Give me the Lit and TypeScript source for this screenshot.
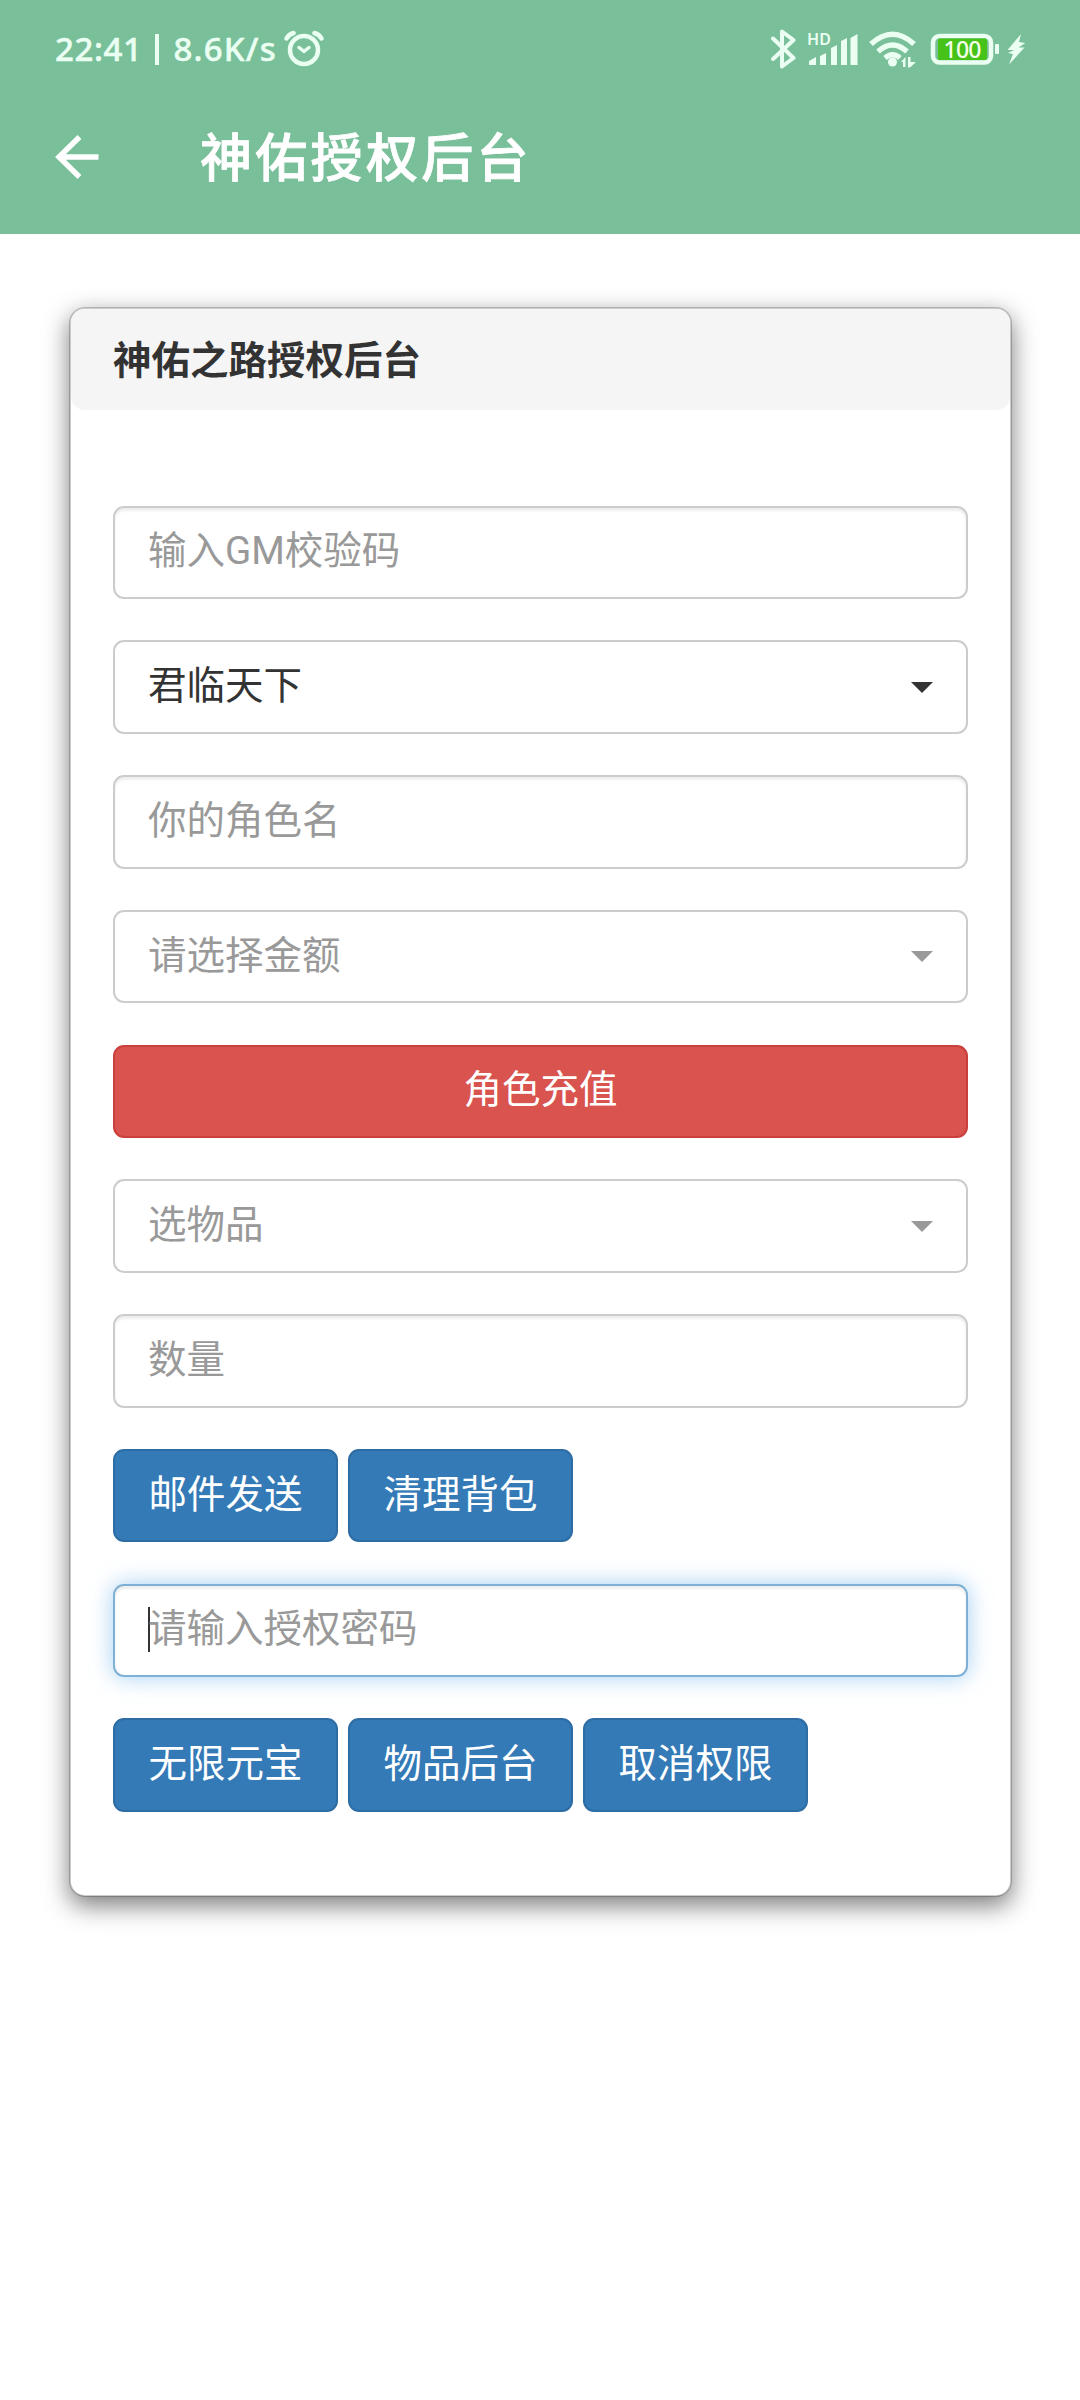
import { LitElement, html, css, nothing } from "lit";
import { customElement, property } from "lit/decorators.js";

@customElement("status-bar")
class StatusBar extends LitElement {
  static styles = css`
    :host { display: flex; box-sizing: border-box; height: 80px; padding: 18px 55px 0 55px; align-items: center; color: #eafff2; font-family: "Noto Sans", "Open Sans", sans-serif; }
    .clock { display: flex; align-items: center; font-size: 33px; font-weight: 500; line-height: 44px; white-space: nowrap; width: 229px; letter-spacing: 0.6px; -webkit-text-stroke: 0.5px #eafff2; }
    .bar { width: 4px; height: 31px; background: #eafff2; margin: 0 14px 0 13px; }
    .speed { letter-spacing: 1.2px; }
    svg { display: block; flex: none; fill: none; stroke: #eafff2; stroke-linecap: round; stroke-linejoin: round; }
    .system { display: flex; align-items: center; margin-left: auto; }
    .bt { margin-right: 10px; }
    .signal { margin-right: 10px; }
    .wifi { margin-right: 13px; }
    .battery { margin-right: 6px; }
    .solid { fill: #eafff2; stroke: none; }
    .level { fill: #46c219; stroke: none; }
    .hd { font: 600 16px "Noto Sans", sans-serif; fill: #eafff2; stroke: none; }
    .pct { font: 500 23px "Noto Sans", sans-serif; fill: #f4ffe9; stroke: none; }
  `;
  render() {
    return html`
      <div class="clock"><span>22:41</span><span class="bar"></span><span class="speed">8.6K/s</span></div>
      <svg width="42" height="42" viewBox="284 28 42 42" stroke-width="4.500">
        <circle cx="304" cy="50" r="14"></circle>
        <path d="M299 47.500l5 4 5-4" stroke-width="3.500"></path>
        <path d="M286.500 38.500q2-4 7-5.500M321.500 38.500q-2-4-7-5.500"></path>
      </svg>
      <div class="system">
        <svg class="bt" width="26" height="42" viewBox="771 28 26 42" stroke-width="4">
          <path d="M773 38.500l20.500 19.500-11.500 8.500v-35l11.500 8.500-20.500 19"></path>
        </svg>
        <svg class="signal" width="52" height="42" viewBox="807 28 52 42">
          <text class="hd" x="807" y="45" textLength="24">HD</text>
          <path class="solid" d="M809 65v-4l7-4v8zM820 65v-9l6-3v12zM831 65v-17l6-3v20zM841 65v-24l6-3v27zM850.500 65v-27l7-4v31z"></path>
        </svg>
        <svg class="wifi" width="48" height="42" viewBox="869 28 48 42" stroke-width="5.500">
          <path d="M871 44q21.500-19.500 43 0M878 51.500q14.500-13 29 0M885 58q7.500-6.500 15 0" stroke-linecap="butt"></path>
          <circle class="solid" cx="892.500" cy="62" r="4.500"></circle>
          <path class="solid" d="M901 62l4.500-5v10h-2.500v-5zM908 57h2.500v5h5.500l-6 5.500h-2z"></path>
        </svg>
        <svg class="battery" width="70" height="42" viewBox="930 28 70 42">
          <rect x="933" y="36" width="58" height="26.500" rx="6.500" stroke-width="4.500"></rect>
          <rect class="level" x="938" y="38.500" width="49" height="21.500" rx="2"></rect>
          <rect class="solid" x="995" y="44" width="4" height="10" rx="1"></rect>
          <text class="pct" x="943.500" y="58" textLength="38">100</text>
        </svg>
        <svg class="charge" width="19" height="42" viewBox="1006 28 19 42">
          <path class="solid" d="M1021 34l-13.500 16h6.500l-6 3 5 1-4 10.500 15.500-17h-6l7-4.500-6.500-1z"></path>
        </svg>
      </div>
    `;
  }
}

@customElement("form-field")
class FormField extends LitElement {
  @property() text = "";
  @property({ type: Boolean, reflect: true }) select = false;
  @property({ type: Boolean, reflect: true }) filled = false;
  @property({ type: Boolean, reflect: true }) active = false;
  static styles = css`
    :host { display: flex; align-items: center; justify-content: space-between; box-sizing: border-box; height: 93.5px; padding: 0 33px; border: 2px solid #ccc; border-radius: 11px; background: #fff; color: #999; box-shadow: inset 0 2.75px 2.75px rgba(0, 0, 0, 0.075); }
    :host([select]) { box-shadow: none; }
    :host([filled]) { color: #333; }
    :host([active]) { border-color: #7fb0d6; box-shadow: inset 0 2.75px 2.75px rgba(0, 0, 0, 0.075), 0 0 22px rgba(102, 175, 233, 0.6); }
    .text { line-height: 55px; white-space: nowrap; margin-top: -3px; }
    .cursor { width: 2px; height: 45px; margin: -2px -2px 0 0; background: #333; flex: none; }
    .value { display: flex; align-items: center; }
    .caret { width: 0; height: 0; border: 11px solid transparent; border-top-color: currentColor; border-bottom: 0; }
  `;
  render() {
    return html`
      <div class="value">
        ${this.active ? html`<span class="cursor"></span>` : nothing}
        <span class="text">${this.text}</span>
      </div>
      ${this.select ? html`<span class="caret"></span>` : nothing}
    `;
  }
}

@customElement("app-root")
class AppRoot extends LitElement {
  static styles = css`
    :host { display: block; height: 2400px; background: #fff; overflow: hidden; font-family: Roboto, "Noto Sans CJK SC", sans-serif; font-size: 38.5px; color: #333; }
    .appbar { background: #78bf9a; height: 234px; }
    .toolbar { display: flex; align-items: center; height: 154px; padding-left: 55px; color: #fff; }
    .back { display: block; width: 46px; height: 46px; fill: none; stroke: #fff; stroke-width: 5.5; }
    .title { margin: 5px 0 0 99px; font-size: 52px; letter-spacing: 3.3px; font-weight: 500; line-height: 80px; -webkit-text-stroke: 0.8px #fff; }
    .card { box-sizing: border-box; margin: 73px 68px 0 69px; height: 1590px; border: 2px solid rgba(0, 0, 0, 0.2); background: #fff; background-clip: padding-box; border-radius: 16px; box-shadow: 0 8.25px 24.75px rgba(0, 0, 0, 0.5); }
    .heading { height: 101px; box-sizing: border-box; padding: 24px 42px 0; background: #f5f5f5; border-radius: 14px; font-weight: 700; line-height: 55px; }
    .form { display: flex; flex-direction: column; gap: 41.25px; padding: 95.500px 42px 0 42px; }
    .row { display: flex; gap: 10px; }
    .btn { box-sizing: border-box; height: 93.5px; width: 225px; padding: 0; border: 2px solid #2e6da4; border-radius: 11px; background: #337ab7; color: #fff; font: inherit; line-height: 55px; padding-bottom: 3px; white-space: nowrap; }
    .danger { width: 100%; border-color: #c9403c; background: #d9534f; }
  `;
  private buttons(labels: string[]) {
    return html`<div class="row">${labels.map((l) => html`<button class="btn">${l}</button>`)}</div>`;
  }
  render() {
    return html`
      <header class="appbar">
        <status-bar></status-bar>
        <div class="toolbar">
          <svg class="back" viewBox="0 0 46 46"><path d="M43.500 23H4M24.500 3L4 23l20.500 20"></path></svg>
          <h1 class="title">神佑授权后台</h1>
        </div>
      </header>
      <main class="card">
        <div class="heading">神佑之路授权后台</div>
        <div class="form">
          <form-field text="输入GM校验码"></form-field>
          <form-field text="君临天下" select filled></form-field>
          <form-field text="你的角色名"></form-field>
          <form-field text="请选择金额" select></form-field>
          <button class="btn danger">角色充值</button>
          <form-field text="选物品" select></form-field>
          <form-field text="数量"></form-field>
          ${this.buttons(["邮件发送", "清理背包"])}
          <form-field text="请输入授权密码" active></form-field>
          ${this.buttons(["无限元宝", "物品后台", "取消权限"])}
        </div>
      </main>
    `;
  }
}
